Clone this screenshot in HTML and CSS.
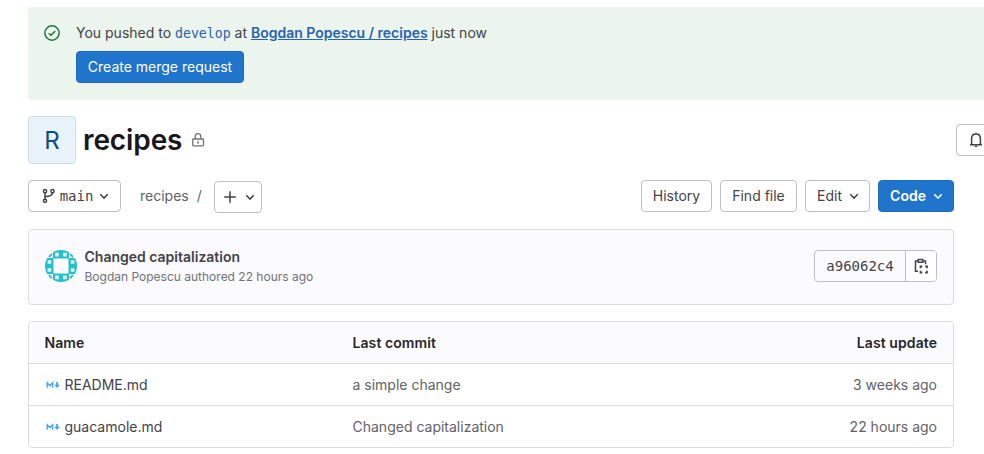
FILE: index.html
```html
<!DOCTYPE html>
<html lang="en">
<head>
<meta charset="utf-8">
<title>recipes</title>
<link rel="stylesheet" href="styles.css">
</head>
<body>
<svg class="defs" width="0" height="0">
  <symbol id="chevron" viewBox="0 0 16 16"><path d="M4.3 6.3 8 10l3.7-3.7" fill="none" stroke="currentColor" stroke-width="1.6"/></symbol>
  <symbol id="markdown" viewBox="0 0 16 16"><path d="M2.2 10.7V5.8L4.9 8.7 7.6 5.8v4.9" fill="none" stroke="#42a5f5" stroke-width="1.4"/><path d="M11.2 5h1.9v2.7H15L12.1 11 9.3 7.7h1.9z" fill="#42a5f5"/></symbol>
</svg>
<section class="alert">
  <svg class="alert-icon" width="16" height="16" viewBox="0 0 16 16" fill="none" stroke="currentColor" stroke-width="1.5"><circle cx="8" cy="8" r="7.2"/><path d="m4.7 8.2 2.2 2.1 4.3-4.2"/></svg>
  <div>
    <p class="alert-text">You pushed to <a class="branch">develop</a> at <a class="project-link">Bogdan Popescu / recipes</a> just now</p>
    <button class="btn primary create">Create merge request</button>
  </div>
</section>
<header class="project">
  <div class="avatar">R</div>
  <h1>recipes</h1>
  <svg class="lock" width="16" height="16" viewBox="0 0 16 16" fill="none" stroke="currentColor" stroke-width="1.3"><rect x="2.7" y="7" width="10.8" height="6.8" rx=".8"/><path d="M5.2 7V4.4a2.8 2.8 0 0 1 5.6 0V7M8 9v2.8"/></svg>
  <button class="btn bell"><svg width="16" height="16" viewBox="0 0 16 16" fill="none" stroke="currentColor" stroke-width="1.5"><path d="M2 12.7h12M3.6 12.4V6.7c0-2.8 1.8-4.6 4.4-4.6s4.4 1.8 4.4 4.6v5.7M8 .8V2"/><path d="M6.2 13.7h3.6L9 15H7z" fill="currentColor" stroke="none"/></svg></button>
</header>
<nav class="toolbar">
  <button class="btn ref"><svg width="16" height="16" viewBox="0 0 16 16" fill="none" stroke="currentColor" stroke-width="1.5"><circle cx="4" cy="3.2" r="1.6"/><circle cx="11.5" cy="3.2" r="1.6"/><circle cx="4" cy="12.8" r="1.6"/><path d="M4 4.8v6.4M11.5 4.8c0 3-2.6 3.7-7.5 3.9"/></svg><span class="mono">main</span><svg width="16" height="16"><use href="#chevron"/></svg></button>
  <span class="crumb">recipes</span><span class="slash">/</span>
  <button class="btn add"><svg width="16" height="16" viewBox="0 0 16 16"><path d="M8 2.2v11.6M2.2 8h11.6" stroke="currentColor" stroke-width="1.5"/></svg><svg width="16" height="16"><use href="#chevron"/></svg></button>
  <div class="actions">
    <button class="btn history">History</button>
    <button class="btn find">Find file</button>
    <button class="btn edit">Edit<svg width="16" height="16"><use href="#chevron"/></svg></button>
    <button class="btn primary code">Code<svg width="16" height="16"><use href="#chevron"/></svg></button>
  </div>
</nav>
<section class="commit">
  <svg class="identicon" width="32" height="32" viewBox="0 0 32 32">
    <path d="M8 0h16v8h8v16h-8v8H8v-8H0V8h8z" fill="#26bfcd"/>
    <path d="M10.2 2.8h3.6v3.6h-3.6zM18.2 2.8h3.6v3.6h-3.6zM10.2 25.6h3.6v3.6h-3.6zM18.2 25.6h3.6v3.6h-3.6zM2.6 10.2h3.6v3.6H2.6zM2.6 18.2h3.6v3.6H2.6zM25.8 10.2h3.6v3.6h-3.6zM25.8 18.2h3.6v3.6h-3.6z" fill="#e2f7f9"/>
    <path d="M8.5 8.5h15v15h-15z" fill="#fff"/>
    <path d="M3.8 7 7 3.8M25 3.8 28.2 7M3.8 25 7 28.2M25 28.2l3.2-3.2" stroke="#26bfcd" stroke-width="2"/>
  </svg>
  <div class="commit-info"><strong>Changed capitalization</strong><span>Bogdan Popescu authored 22 hours ago</span></div>
  <div class="sha"><span class="mono">a96062c4</span><button aria-label="Copy"><svg width="16" height="16" viewBox="0 0 16 16" fill="none" stroke="currentColor" stroke-width="1.5"><path d="M5 13.2H2.5V3H5M10.2 3h2.3v3.2"/><path d="M5.2 1.6h4.6v2.6H5.2z"/><path d="M7.5 10.2V8.4h1.8M12.2 8.4H14v1.8M14 12.8v1.8h-1.8M9.3 14.6H7.5v-1.8" stroke-width="1.7"/></svg></button></div>
</section>
<table class="files">
  <thead><tr><th class="name">Name</th><th>Last commit</th><th class="date">Last update</th></tr></thead>
  <tbody>
    <tr><td><span class="file"><svg width="16" height="16"><use href="#markdown"/></svg>README.md</span></td><td class="muted">a simple change</td><td class="date muted">3 weeks ago</td></tr>
    <tr><td><span class="file"><svg width="16" height="16"><use href="#markdown"/></svg>guacamole.md</span></td><td class="muted">Changed capitalization</td><td class="date muted">22 hours ago</td></tr>
  </tbody>
</table>
</body>
</html>
```
FILE: styles.css
```css
* { box-sizing: border-box; }
body {
  margin: 0;
  padding: 7px 30px 0 28px;
  overflow: hidden;
  background: #fff;
  color: #434248;
  font: 14px/20px Inter, sans-serif;
}
svg { display: block; flex: none; }
.defs { position: absolute; }
.mono { font-family: "DejaVu Sans Mono", monospace; font-size: 14px; }
.alert {
  display: flex;
  gap: 16px;
  height: 93px;
  margin-right: -30px;
  padding: 16px;
  border-radius: 4px 0 0 4px;
  background: #ebf4ed;
}
.alert-icon { margin-top: 2px; color: #217645; }
.alert-text { margin: 0 0 8px; white-space: nowrap; }
.branch { color: #2763b0; font: 13.2px/16px "DejaVu Sans Mono", monospace; }
.project-link { color: #2763b0; font-weight: 600; text-decoration: underline; }
.btn {
  display: flex;
  align-items: center;
  justify-content: center;
  height: 32px;
  padding: 0;
  border: 1px solid #bfbfc3;
  border-radius: 4px;
  background: #fff;
  color: #434248;
  font: 14px/16px Inter, sans-serif;
  white-space: nowrap;
}
.primary { border-color: #1f68bd; background: #1f75cb; color: #fff; }
.create { width: 168px; }
.project { display: flex; align-items: center; height: 48px; margin-top: 16px; }
.avatar {
  width: 48px;
  height: 48px;
  border: 1px solid #ccdbe8;
  border-radius: 4px;
  background: #e9f3fc;
  color: #0b4b86;
  font-size: 24px;
  line-height: 47px;
  text-align: center;
}
h1 { margin: 0 0 0 7px; color: #18171d; font-size: 28px; font-weight: 600; line-height: 36px; letter-spacing: -.1px; }
.lock { margin-left: 8px; color: #737278; }
.bell { width: 40px; margin: 0 -42px 0 auto; }
.toolbar { display: flex; align-items: center; height: 32px; margin-top: 16px; }
.ref { gap: 3px; width: 93px; padding-left: 4px; }
.crumb { margin-left: 19px; color: #626168; }
.slash { margin-left: 8px; color: #626168; }
.add { gap: 4px; width: 48px; margin: 2px 0 0 12px; padding-left: 4px; }
.actions { display: flex; gap: 8px; margin-left: auto; }
.history { width: 71px; }
.find { width: 77px; }
.edit { gap: 4px; width: 65px; padding-left: 4px; }
.code { gap: 4px; width: 76px; padding-left: 4px; font-weight: 600; }
.commit {
  display: flex;
  align-items: center;
  height: 76px;
  margin-top: 17px;
  padding: 0 16px;
  border: 1px solid #dcdcde;
  border-radius: 4px;
  background: #fbfafd;
}
.identicon { border-radius: 50%; background: #fff; margin-top: -2px; }
.commit-info { display: flex; flex-direction: column; margin: 0 0 0 7.5px; }
.commit-info strong { font-weight: 600; }
.commit-info span { color: #737278; font-size: 12px; }
.sha { display: flex; height: 32px; margin: -2px 0 0 auto; border: 1px solid #bfbfc3; border-radius: 4px; }
.sha .mono { width: 90px; line-height: 30px; text-align: center; }
.sha button {
  display: flex;
  align-items: center;
  justify-content: center;
  width: 31px;
  padding: 0;
  border: 0;
  border-left: 1px solid #bfbfc3;
  border-radius: 0 3px 3px 0;
  background: #fff;
  color: #434248;
}
.files {
  width: 926px;
  margin-top: 16px;
  border: 1px solid #dcdcde;
  border-radius: 4px;
  border-spacing: 0;
  table-layout: fixed;
  overflow: hidden;
}
.files th, .files td { height: 42px; padding: 0 16px 0 15.5px; text-align: left; }
.files thead th { height: 41px; background: #fbfafd; color: #28272d; font-weight: 600; letter-spacing: .08px; }
.files tbody td { border-top: 1px solid #dcdcde; }
.files .name { width: 308px; }
.files .date { text-align: right; }
.files .muted { color: #626168; }
.file { display: flex; align-items: center; gap: 4px; }
```
